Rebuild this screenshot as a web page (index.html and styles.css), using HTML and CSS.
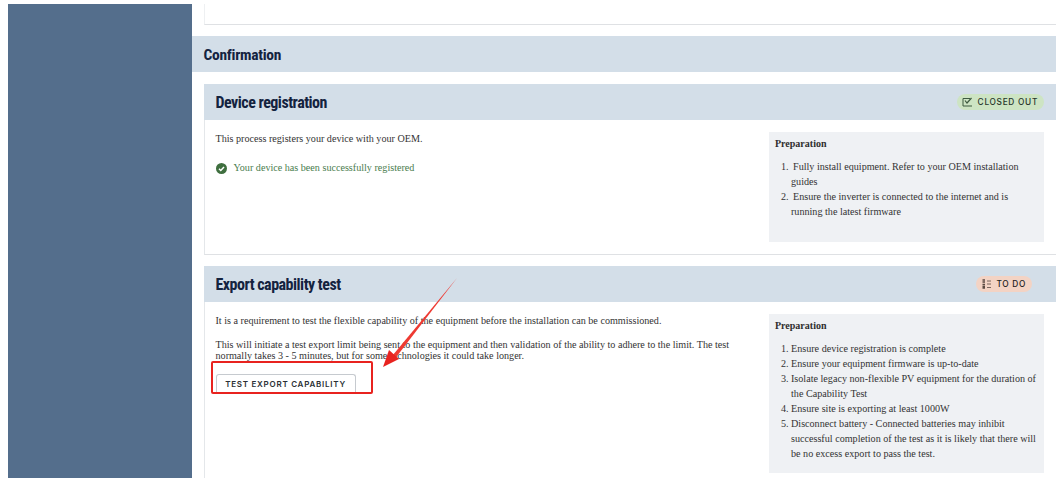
FILE: index.html
```html
<!DOCTYPE html>
<html lang="en">
<head>
<meta charset="utf-8">
<title>Confirmation</title>
<link rel="stylesheet" href="styles.css">
</head>
<body>
<div class="page">
  <aside class="sidebar"></aside>
  <main class="main">
    <div class="stub"></div>
    <h1 class="banner"><span class="condensed">Confirmation</span></h1>
    <section class="card">
      <header class="card-head">
        <h2 class="condensed">Device registration</h2>
        <span class="pill pill-done">
          <svg width="11" height="10" viewBox="0 0 11 10" fill="none" stroke="#3d5a3f" stroke-width="1"><path d="M8 1.500H1v7.500h9"/><path d="M3 3.500l2 2.500L9.500 1" stroke-width="1.200"/></svg>
          CLOSED OUT
        </span>
      </header>
      <div class="card-body">
        <div class="copy">
          <p>This process registers your device with your OEM.</p>
          <p class="success">
            <svg width="11" height="11" viewBox="0 0 11 11"><circle cx="5.500" cy="5.500" r="5.500" fill="#3f6f3f"/><path d="M3 5.700l1.800 1.800L8 4" fill="none" stroke="#fff" stroke-width="1.500"/></svg>
            Your device has been successfully registered
          </p>
        </div>
        <div class="prep">
          <h3>Preparation</h3>
          <ol class="steps-wide">
            <li>Fully install equipment. Refer to your OEM installation guides</li>
            <li>Ensure the inverter is connected to the internet and is running the latest firmware</li>
          </ol>
        </div>
      </div>
    </section>
    <section class="card">
      <header class="card-head">
        <h2 class="condensed">Export capability test</h2>
        <span class="pill pill-todo">
          <svg width="9" height="10" viewBox="0 0 9 10" fill="none"><path d="M0.500 1h2.500M0.500 3h2.500M0.500 5.500h2.500M0.500 7.500h2.500M0.500 9h2.500" stroke="#5b4a42" stroke-width="1.300"/><path d="M5 2h4M5 5h4M5 8.500h4" stroke="#5b4a42" stroke-width=".8"/></svg>
          TO DO
        </span>
      </header>
      <div class="card-body">
        <div class="copy">
          <p>It is a requirement to test the flexible capability of the equipment before the installation can be commissioned.</p>
          <p class="line-tight">This will initiate a test export limit being sent to the equipment and then validation of the ability to adhere to the limit. The test normally takes 3 - 5 minutes, but for some technologies it could take longer.</p>
          <button class="action" type="button">TEST EXPORT CAPABILITY</button>
        </div>
        <div class="prep">
          <h3>Preparation</h3>
          <ol>
            <li>Ensure device registration is complete</li>
            <li>Ensure your equipment firmware is up-to-date</li>
            <li>Isolate legacy non-flexible PV equipment for the duration of the Capability Test</li>
            <li>Ensure site is exporting at least 1000W</li>
            <li>Disconnect battery - Connected batteries may inhibit successful completion of the test as it is likely that there will be no excess export to pass the test.</li>
          </ol>
        </div>
      </div>
    </section>
  </main>
  <div class="callout-box"></div>
  <svg class="callout-arrow" width="90" height="100" viewBox="0 0 90 100"><path d="M77 1L12.500 78.500L15.500 81L77 1Z" fill="#ee3a32"/><path d="M3 90L9 73L19 82Z" fill="#e8231f"/></svg>
</div>
</body>
</html>
```
FILE: styles.css
```css
* { box-sizing: border-box; }
html, body { margin: 0; height: 100%; background: #fff; }
body { overflow: hidden; font-family: "Liberation Serif", serif; font-size: 10.150px; color: #333; }
.page { display: flex; height: 480px; padding: 4px 4px 2px 8px; overflow: hidden; }
.sidebar { flex: 0 0 183.500px; background: #546e8c; }
.main { flex: 1; min-width: 0; overflow: hidden; }
.stub { height: 21px; margin: 0 0 11px 12px; border-left: 1px solid #eef0f2; border-bottom: 1px solid #dfe1e4; }
.condensed { display: inline-block; color: #14233f; font-family: "Roboto", sans-serif; font-weight: 700; font-stretch: 75%; }
.banner { height: 36px; margin: 0 0 12px; padding: 2px 12px 0; background: #d3dee8; font-size: 15.500px; line-height: 34px; letter-spacing: -.3px; }
.card { margin: 0 0 11px 12px; border-left: 1px solid #e4e7ea; border-bottom: 1px solid #dfe1e4; }
.card:last-child { margin-bottom: 0; border-bottom: 0; }
.card-head { display: flex; align-items: center; justify-content: space-between; height: 36px; padding: 0 12px; margin-left: -1px; background: #d3dee8; }
.card-head h2 { margin: 0; padding-top: 2px; font-size: 16px; line-height: 34px; letter-spacing: -.5px; }
.pill { display: flex; align-items: center; height: 16px; border-radius: 8px; font: 500 8.300px/16px "Inter", sans-serif; letter-spacing: .7px; color: #26352a; }
.pill svg { margin-right: 5px; }
.pill-done { padding: 0 6px 0 5px; background: #cde4c3; }
.pill-todo { margin-right: 12px; padding: 0 6px; background: #f3d3c4; color: #222; }
.card-body { display: flex; justify-content: space-between; min-height: 134px; padding: 12px 12px 12px 11px; }
.copy { width: 516px; padding-top: 1px; line-height: 12px; }
.copy p { margin: 0; }
.copy .success { display: flex; align-items: center; gap: 7px; margin-top: 17px; color: #4a7d4e; }
.copy .line-tight { margin-top: 12px; line-height: 11px; }
.action { display: block; width: 140px; height: 19px; margin-top: 13px; padding: 0; background: #fff; border: 1px solid #c6cacf; border-bottom: 0; border-radius: 3px 3px 0 0; color: #2b3035; font: 600 8px/18px "Inter", sans-serif; letter-spacing: .75px; }
.prep { flex: 0 0 275px; padding: 6px 6px 12px; background: #eff1f4; }
.prep h3 { margin: 0 0 9px; font: bold 10px/12px "Liberation Serif", serif; color: #2e2e2e; }
.prep ol { margin: 0; padding-left: 16px; line-height: 15px; }
.steps-wide li { text-indent: 2px; }
.callout-box { position: absolute; left: 211px; top: 361px; width: 162px; height: 33px; border: 2px solid #e8231f; border-radius: 2px; }
.callout-arrow { position: absolute; left: 380px; top: 277px; }
```
